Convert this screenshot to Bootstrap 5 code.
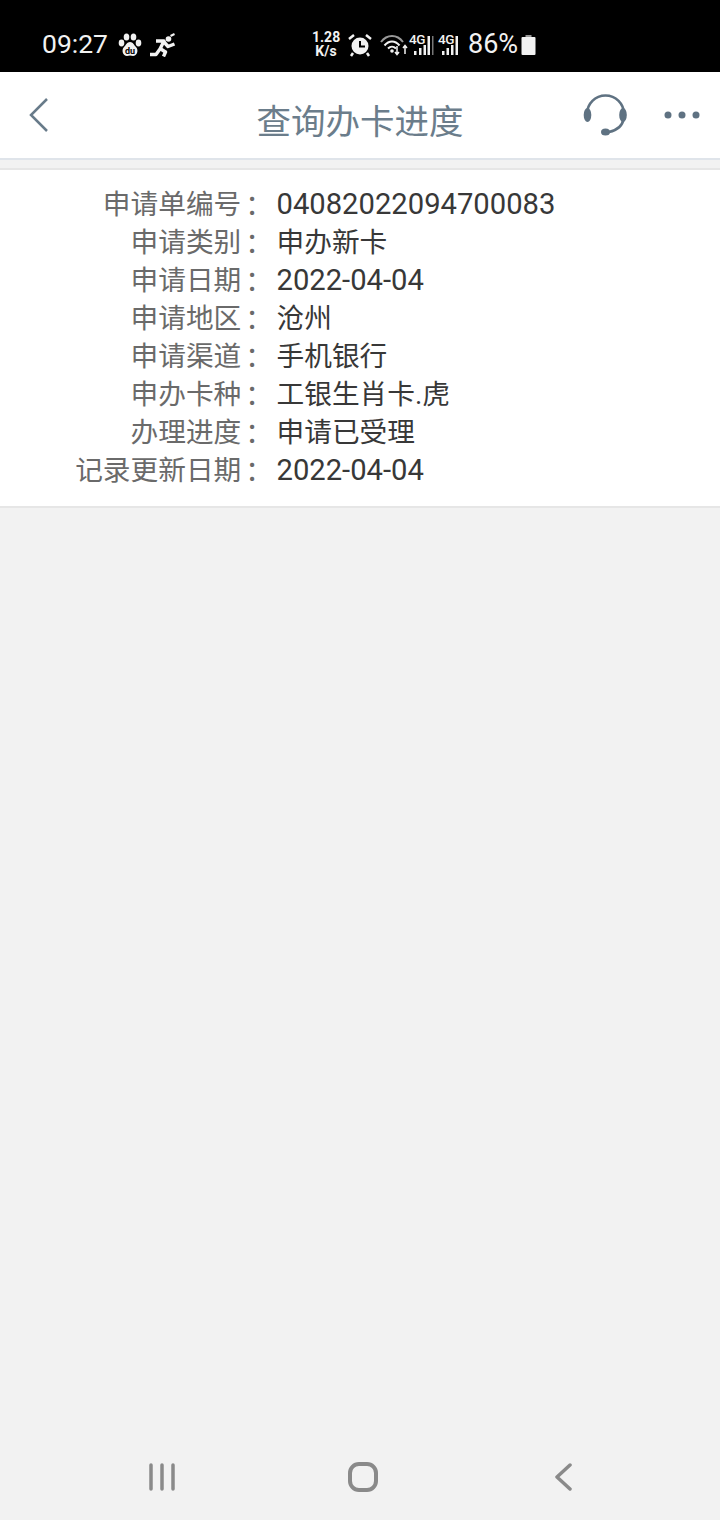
<!DOCTYPE html>
<html lang="zh-CN">
<head>
  <meta charset="UTF-8">
  <meta name="viewport" content="width=device-width, initial-scale=1.0">
  <title>查询办卡进度</title>
  <link href="https://cdn.jsdelivr.net/npm/bootstrap@5.3.2/dist/css/bootstrap.min.css" rel="stylesheet">
  <style>
    html, body { height: 100%; }
    body {
      background: #f2f2f2;
      font-family: Roboto, "Noto Sans CJK SC", sans-serif;
      min-height: 1520px;
    }
    svg { display: block; flex: none; }

    /* status bar */
    .status-bar { height: 72px; background: #000; color: #f2f2f2; padding: 17px 0 0 42px; }
    .status-time { font-size: 26.5px; line-height: 1; width: 76px; }
    .status-left { width: 270px; }
    .speed { font-size: 14px; font-weight: 700; line-height: 13.5px; text-align: center; width: 28px; }
    .signal { position: relative; width: 25px; height: 24px; }
    .signal span { position: absolute; left: 0; top: 1px; font-size: 13.5px; font-weight: 500; line-height: 11px; letter-spacing: -.5px; }
    .signal-second { margin-left: 4px; }
    .battery-pct { font-size: 27px; line-height: 1; margin-left: 5px; }
    .battery-icon { margin-left: 3px; }

    /* title bar */
    .title-bar { height: 88px; background: #fff; border-bottom: 2px solid #dfe4ea; color: #5f7282; }
    .title-side { width: 140px; }
    .title-text { font-size: 34.5px; font-weight: 400; line-height: 1; padding-top: 14px; color: #6b7d8b; }
    .title-keys { padding-right: 20px; gap: 36px; }

    /* details */
    .detail-panel {
      margin-top: 8px;
      background: #fff;
      border-top: 2px solid #e6e6e6;
      border-bottom: 2px solid #e6e6e6;
      padding: 15px 0 17px;
    }
    .detail-row { height: 38px; line-height: 40px; font-size: 27.7px; font-weight: 400; }
    .detail-label { width: 269px; text-align: right; color: #6a6a6a; flex: none; }
    .detail-value { margin-left: 7.5px; color: #383838; }
    .digits { font-size: 29.2px; line-height: 38px; font-family: Roboto, sans-serif; }
    .colon { font-family: "Noto Sans CJK TC", sans-serif; line-height: 1; margin-left: -3px; margin-right: 3px; vertical-align: -2px; }

    /* android nav */
    .nav-keys { height: 86px; padding-left: 6px; }
    .nav-key { width: 201px; }
  </style>
</head>
<body class="d-flex flex-column">

  <!-- Status bar -->
  <div class="status-bar d-flex align-items-center">
    <div class="status-left d-flex align-items-center">
      <div class="status-time">09:27</div>
      <svg width="24" height="24" viewBox="0 0 24 24" fill="#f2f2f2">
        <ellipse cx="3.500" cy="10" rx="2.800" ry="3.400"/>
        <ellipse cx="8.500" cy="4" rx="2.800" ry="3.600"/>
        <ellipse cx="15.500" cy="4" rx="2.800" ry="3.600"/>
        <ellipse cx="20.500" cy="10" rx="2.800" ry="3.400"/>
        <path d="M12 9c3 0 4 3 6 5 3 3 1 9-3 9-1 0-2-.5-3-.5s-2 .5-3 .5c-4 0-6-6-3-9 2-2 3-5 6-5z"/>
        <text x="12" y="20.500" text-anchor="middle" font-family="Roboto, sans-serif" font-size="9" font-weight="700" fill="#000">du</text>
      </svg>
      <svg class="ms-2" width="26" height="24" viewBox="0 0 26 24" fill="none" stroke="#f2f2f2" stroke-width="3.400" stroke-linejoin="round">
        <circle cx="18.500" cy="6" r="2.800" fill="#f2f2f2" stroke="none"/>
        <path d="M20.500 3 24.500 1" stroke-width="2"/>
        <path d="M6 8h8l-4 8-4 5.500H0"/>
        <path d="M14 9l4 4.500 6.500-2.500"/>
        <path d="M10 15.500l5.500 3.500-2 4.500"/>
      </svg>
    </div>
    <div class="speed">1.28<br>K/s</div>
    <svg class="ms-2" width="24" height="24" viewBox="0 0 24 24">
      <circle cx="12" cy="13" r="8.500" fill="#f2f2f2"/>
      <path d="M12 8v5.500h5" fill="none" stroke="#000" stroke-width="2"/>
      <path d="M1 6l5-4M23 6l-5-4M5 20l-2 3M19 20l2 3" stroke="#f2f2f2" stroke-width="2.500"/>
    </svg>
    <svg class="ms-2" width="29" height="22" viewBox="0 0 29 22" fill="none" stroke="#f2f2f2">
      <path d="M1 8C7 0 17 0 23 8" stroke="#999" stroke-width="2"/>
      <path d="M4.500 11.500C9 6 15 6 19.500 11.500" stroke-width="2"/>
      <path d="M8 14.500C10.500 12 13.500 12 16 14.500" stroke-width="2"/>
      <circle cx="12" cy="17" r="1.800" fill="#f2f2f2" stroke="none"/>
      <path d="M17 12v8M15 18l2 2.500 2-2.500M25 20v-8M23 14l2-2.500 2 2.500" stroke-width="1.500"/>
    </svg>
    <div class="signal">
      <span>4G</span>
      <svg width="25" height="24" viewBox="0 0 25 24" fill="#f2f2f2">
        <rect x="5" y="18" width="2.500" height="4"/><rect x="10" y="15" width="2.500" height="7"/>
        <rect x="14.500" y="12" width="2.500" height="10"/><rect x="18.500" y="3" width="2.500" height="19"/>
        <rect x="23" y="3" width="1.500" height="19" fill="#777"/>
      </svg>
    </div>
    <div class="signal signal-second">
      <span>4G</span>
      <svg width="25" height="24" viewBox="0 0 25 24" fill="#f2f2f2">
        <rect x="4" y="18" width="2.500" height="4"/><rect x="8.500" y="15" width="2.500" height="7"/>
        <rect x="13" y="12" width="2.500" height="10"/><rect x="17.500" y="3" width="2.500" height="19"/>
      </svg>
    </div>
    <div class="battery-pct">86%</div>
    <svg class="battery-icon" width="15" height="20" viewBox="0 0 15 20" fill="#f2f2f2">
      <rect x="4.500" y="0" width="6" height="3" fill="#999"/>
      <rect x="0.500" y="2" width="14" height="18" rx="1"/>
    </svg>
  </div>

  <!-- Title bar -->
  <div class="title-bar d-flex align-items-center justify-content-between">
    <div class="title-side ps-4">
      <svg width="26" height="36" viewBox="0 0 26 36" fill="none" stroke="#687b8a" stroke-width="2.500">
        <path d="M23 2 7 18 23 34"/>
      </svg>
    </div>
    <div class="title-text">查询办卡进度</div>
    <div class="title-side title-keys d-flex align-items-center justify-content-end">
      <svg width="46" height="44" viewBox="0 0 46 44" fill="none" stroke="#5f7282">
        <path d="M5 21a18.500 18.500 0 0 1 37 0" stroke-width="2.600"/>
        <path d="M41.500 26Q40 36 27 39" stroke-width="2.600"/>
        <ellipse cx="5.500" cy="22" rx="3.800" ry="7" fill="#5f7282" stroke="none"/>
        <ellipse cx="41" cy="22" rx="3.800" ry="7" fill="#5f7282" stroke="none"/>
        <ellipse cx="23.500" cy="39" rx="4.500" ry="3.500" fill="#5f7282" stroke="none"/>
      </svg>
      <svg width="36" height="8" viewBox="0 0 36 8" fill="#5f7282">
        <circle cx="4" cy="4" r="3.500"/><circle cx="18" cy="4" r="3.500"/><circle cx="32" cy="4" r="3.500"/>
      </svg>
    </div>
  </div>

  <!-- Details -->
  <div class="detail-panel">
    <div class="detail-row d-flex"><div class="detail-label">申请单编号<span class="colon" lang="zh-TW">：</span></div><div class="detail-value digits">04082022094700083</div></div>
    <div class="detail-row d-flex"><div class="detail-label">申请类别<span class="colon" lang="zh-TW">：</span></div><div class="detail-value">申办新卡</div></div>
    <div class="detail-row d-flex"><div class="detail-label">申请日期<span class="colon" lang="zh-TW">：</span></div><div class="detail-value digits">2022-04-04</div></div>
    <div class="detail-row d-flex"><div class="detail-label">申请地区<span class="colon" lang="zh-TW">：</span></div><div class="detail-value">沧州</div></div>
    <div class="detail-row d-flex"><div class="detail-label">申请渠道<span class="colon" lang="zh-TW">：</span></div><div class="detail-value">手机银行</div></div>
    <div class="detail-row d-flex"><div class="detail-label">申办卡种<span class="colon" lang="zh-TW">：</span></div><div class="detail-value">工银生肖卡.虎</div></div>
    <div class="detail-row d-flex"><div class="detail-label">办理进度<span class="colon" lang="zh-TW">：</span></div><div class="detail-value">申请已受理</div></div>
    <div class="detail-row d-flex"><div class="detail-label">记录更新日期<span class="colon" lang="zh-TW">：</span></div><div class="detail-value digits">2022-04-04</div></div>
  </div>

  <div class="flex-grow-1"></div>

  <!-- Android nav keys -->
  <div class="nav-keys d-flex align-items-center justify-content-center">
    <div class="nav-key d-flex justify-content-center">
      <svg width="28" height="28" viewBox="0 0 28 28" stroke="#8a8a8a" stroke-width="3.500" stroke-linecap="round">
        <path d="M3 2v24M14 2v24M25 2v24"/>
      </svg>
    </div>
    <div class="nav-key d-flex justify-content-center">
      <svg width="30" height="30" viewBox="0 0 30 30" fill="none" stroke="#8a8a8a" stroke-width="4">
        <rect x="2" y="2" width="26" height="26" rx="9"/>
      </svg>
    </div>
    <div class="nav-key d-flex justify-content-center">
      <svg width="18" height="28" viewBox="0 0 18 28" fill="none" stroke="#8a8a8a" stroke-width="3.500" stroke-linecap="round" stroke-linejoin="round">
        <path d="M15 2 2 14 15 26"/>
      </svg>
    </div>
  </div>

  <script src="https://cdn.jsdelivr.net/npm/bootstrap@5.3.2/dist/js/bootstrap.bundle.min.js"></script>
</body>
</html>
